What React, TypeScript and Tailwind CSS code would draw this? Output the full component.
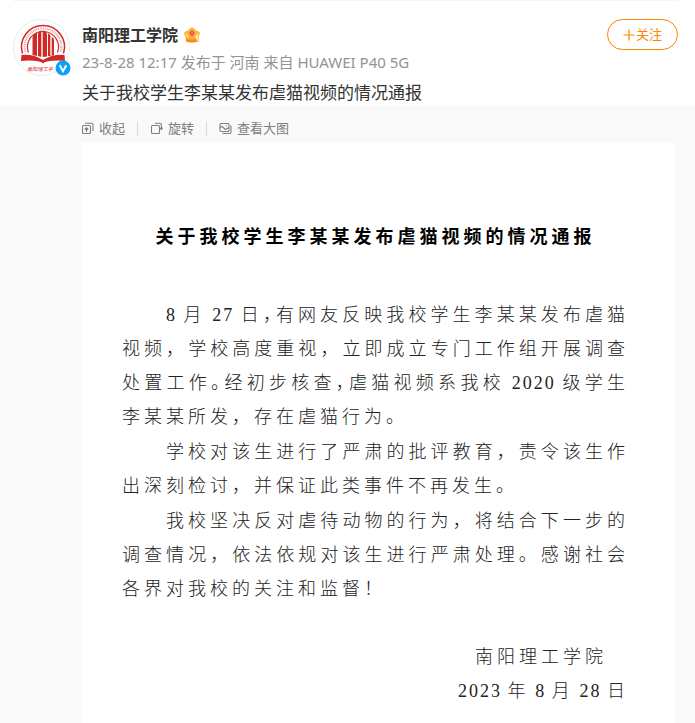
import type { ReactNode } from "react";

const Num = ({ children }: { children: ReactNode }) => (
  <span className="tracking-[2px]">{children}</span>
);

// punctuation set in a half-width cell
const Half = ({ children }: { children: ReactNode }) => (
  <span className="[font-feature-settings:'halt']">{children}</span>
);

const SchoolLogo = () => (
  <svg viewBox="0 0 56 56" className="h-14 w-14" aria-hidden="true">
    <g fill="none" stroke="#cf2a27">
      <path d="M8.5 33.500A21.500 21.500 0 1 1 49.500 33.500" strokeWidth="1.500" />
      <path d="M11.500 32A18.300 18.300 0 1 1 46.500 32" strokeWidth="2" strokeDasharray="0.9 0.9" opacity="0.5" />
      <path d="M14.500 32.500A15.500 15.500 0 1 1 43.500 32.500" strokeWidth="1.200" />
    </g>
    <g fill="#cf2a27">
      <path d="M18.500 35V18q0-4 4.500-5.500V36zM24 36V14q0-3 3.500-3.500V37z" />
      <path d="M28.500 37V10.500q4.500 0 4.500 4.500V36.500zM34 36V13.500q2.500.5 2.500 3.500V36zM37.500 36V17q2.500.5 2.500 3V35z" />
      <path d="M7.500 35q12-1 21.500 5 9.500-6 21.500-5l.5 6q-10-1-18 .5-3 .5-4 2-1-1.500-4-2-8-1.500-18-.5z" />
      <text x="13" y="50.500" fontSize="5.200" fontStyle="italic">
        南阳理工学
      </text>
    </g>
    <path d="M23.500 15v20M28 12v25M33.500 15v21M37 17v18" stroke="#fff" strokeWidth=".7" />
  </svg>
);

const VerifiedBadge = () => (
  <svg viewBox="0 0 16 16" className="absolute -right-0.5 -bottom-px h-4 w-4" aria-hidden="true">
    <circle cx="8" cy="8" r="7.500" fill="#0ba1f8" />
    <path d="M4.700 5.200L8 11.200l3.300-6" fill="none" stroke="#fff" strokeWidth="1.900" />
  </svg>
);

const Crown = () => (
  <svg viewBox="0 0 16 16" className="h-4 w-4" aria-hidden="true">
    <path
      d="M.5 5q1.500-1.300 3-.8.5-2 2.500-2.300Q6.500.5 8 .5t2 1.400q2 .3 2.500 2.300 1.500-.5 3 .8.8 2-1 5v4.500Q8 16.500 2 14.500L1.500 10Q-.3 7 .5 5z"
      fill="#fbb03b"
    />
    <path d="M2 11.500q6 2 12.500 0V14.300q-6 2.200-12.300.2z" fill="#f98a1d" />
    <path d="M2.500 6.500q.5 3 2 4M13.500 6.500q-.5 2.500-2 4" stroke="#ffe27a" strokeWidth="1.500" fill="none" />
    <path d="M8 3.500l2.800 2.500L8 9.300 5.200 6z" fill="#e8413a" />
    <path d="M7 6l1-1 1 1-1 1z" fill="#ffb3a0" />
    <path d="M11.500 10.500l1.700-1v4.500" stroke="#fff4d0" strokeWidth="1.300" fill="none" />
  </svg>
);

const iconProps = {
  viewBox: "0 0 13 13",
  className: "h-[13px] w-[13px]",
  fill: "none",
  stroke: "currentColor",
  strokeWidth: 1.1,
  "aria-hidden": true,
} as const;

const tools = [
  {
    label: "收起",
    icon: (
      <svg {...iconProps}>
        <rect x="1.500" y="3.500" width="8" height="8" rx="1" />
        <path d="M4 1.200h6.500q1.500 0 1.500 1.500V9M5.500 10V6M3.700 7.500l1.800-1.700 1.800 1.700" />
      </svg>
    ),
  },
  {
    label: "旋转",
    icon: (
      <svg {...iconProps}>
        <rect x="1.500" y="3.500" width="8" height="8" rx="1" />
        <path d="M5 1.200h4.500q1.900 0 1.900 1.900v4M9.600 5.700l1.800 1.800 1.600-1.800" />
      </svg>
    ),
  },
  {
    label: "查看大图",
    icon: (
      <svg {...iconProps}>
        <rect x="1" y="1.500" width="9" height="8" rx="1" />
        <path d="M12 3.500V10q0 1.500-1.500 1.500H3.500M1 5.500l2-1 3.500 3L10 5.500M7 3.700h1" />
      </svg>
    ),
  },
];

const PostHeader = () => (
  <header className="flex items-start gap-3 bg-white pb-px pl-[13px] pr-[17px]">
    <div className="relative mt-[18px] h-[57px] w-[57px] shrink-0 rounded-full border border-[#ececec]">
      <SchoolLogo />
      <VerifiedBadge />
    </div>
    <div className="min-w-0 flex-1 pt-[22px] leading-6">
      <div className="flex items-center gap-[6px]">
        <a href="#" className="text-[16px] font-bold text-[#333]">
          南阳理工学院
        </a>
        <Crown />
      </div>
      <p className="mt-[3px] text-[15px] text-[#939393]">
        23-8-28 12:17 发布于 河南 来自 HUAWEI P40 5G
      </p>
      <p className="mt-[7px] text-[17px] text-[#333]">
        关于我校学生李某某发布虐猫视频的情况通报
      </p>
    </div>
    <button
      type="button"
      className="mt-[18px] flex h-[31px] w-[71px] shrink-0 items-center justify-center gap-px rounded-full border border-[#ff8200] text-[13px] text-[#ff8200]"
    >
      <svg viewBox="0 0 12 12" className="h-3 w-3" stroke="currentColor" aria-hidden="true">
        <path d="M6 .5v11M.5 6h11" strokeWidth="1.200" />
      </svg>
      关注
    </button>
  </header>
);

const Toolbar = () => (
  <div className="flex items-center gap-3 pt-2 text-[13px] leading-7 text-[#808080]">
    {tools.map((tool, i) => (
      <div key={tool.label} className="flex items-center gap-3">
        {i > 0 && <span className="h-[15px] w-px bg-[#d9d9d9]" />}
        <button type="button" className="flex items-center gap-[5px]">
          {tool.icon}
          {tool.label}
        </button>
      </div>
    ))}
  </div>
);

const Notice = () => (
  <article className="flex-1 rounded-t bg-white pt-[78px] pr-[46px] pb-3 pl-[41px] font-['Liberation_Serif','Noto_Sans_CJK_SC',serif] text-[18px] leading-[34px] font-light tracking-[4px] text-[#222]">
    <h1 className="text-center font-bold text-black">
      关于我校学生李某某发布虐猫视频的情况通报
    </h1>
    <div className="mt-11 flex flex-col gap-px text-justify">
      <p className="indent-[44px]">
        <Num>8 </Num>月<Num> 27 </Num>日<Half>，</Half>
        有网友反映我校学生李某某发布虐猫视频，学校高度重视，立即成立专门工作组开展调查处置工作<Half>。</Half>
        经初步核查<Half>，</Half>虐猫视频系我校<Num> 2020 </Num>
        级学生李某某所发，存在虐猫行为。
      </p>
      <p className="indent-[44px]">
        学校对该生进行了严肃的批评教育，责令该生作出深刻检讨，并保证此类事件不再发生。
      </p>
      <p className="indent-[44px]">
        我校坚决反对虐待动物的行为，将结合下一步的调查情况，依法依规对该生进行严肃处理。感谢社会各界对我校的关注和监督！
      </p>
    </div>
    <div className="mt-[34px] text-right">
      <p className="pr-[22px]">南阳理工学院</p>
      <p>
        <Num>2023&thinsp;</Num>年<Num>&thinsp;8&thinsp;</Num>月
        <Num>&thinsp;28&thinsp;</Num>日
      </p>
    </div>
  </article>
);

export default function App() {
  return (
    <div
      lang="zh-CN"
      className="flex min-h-screen flex-col bg-[#f9f9f9] font-['Noto_Sans','Noto_Sans_CJK_SC',sans-serif]"
    >
      <div className="bg-white pr-[17px] pl-[13px]">
        <div className="h-px bg-[#f5f5f5]" />
      </div>
      <PostHeader />
      <main className="flex flex-1 flex-col pr-5 pl-[81px]">
        <Toolbar />
        <Notice />
      </main>
    </div>
  );
}
